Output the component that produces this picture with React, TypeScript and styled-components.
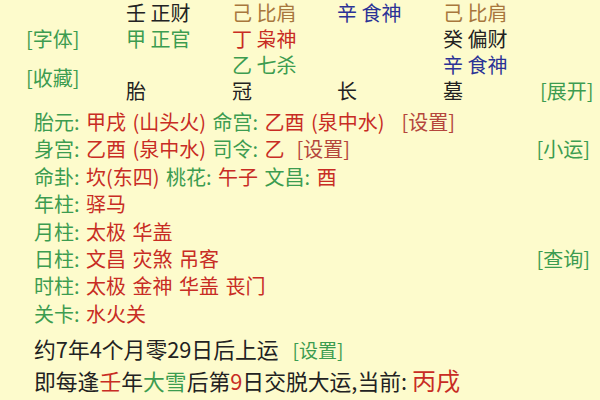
import * as React from "react";
import styled, { createGlobalStyle } from "styled-components";

const GlobalStyle = createGlobalStyle`
    html, body {
        margin: 0;
        padding: 0;
        background: #fdfbcc;
    }
    body {
        font-family: "Noto Sans CJK SC", "Noto Sans", sans-serif;
        overflow: hidden;
    }
`

const colors: { [name: string]: string } = {
    black: "#222222",
    green: "#3c9c50",
    red: "#c82c24",
    blue: "#2b3296",
    brown: "#a8773d",
    link: "#b4463c",
}

const Page = styled.div`
    width: 600px;
    height: 400px;
    overflow: hidden;
    font-size: 20px;
    color: ${colors.black};
`

const PillarGrid = styled.div`
    display: grid;
    grid-template-columns: 126px 106px 105px 106px 97px 1fr;
    grid-template-rows: repeat(4, 26px);
    line-height: 26px;
`

const Cell = styled.div<{ $color?: string; $col: number; $row: number }>`
    grid-column: ${p => p.$col};
    grid-row: ${p => p.$row};
    color: ${p => colors[p.$color || "black"]};
    white-space: nowrap;
`

const SideButtons = styled.div`
    grid-column: 1;
    grid-row: 2 / 5;
    display: flex;
    flex-direction: column;
    gap: 13px;
    padding-left: 26px;
`

const Action = styled.span<{ $color?: string }>`
    color: ${p => colors[p.$color || "green"]};
    white-space: nowrap;
`

const RightAction = styled(Action)`
    grid-column: 6;
    grid-row: 4;
`

const InfoList = styled.div`
    display: flex;
    flex-direction: column;
    margin-top: 4px;
    padding: 0 10px 0 34px;
`

const InfoLine = styled.div`
    display: flex;
    justify-content: space-between;
    align-items: center;
    height: 27.4px;
    line-height: 27.4px;
    white-space: nowrap;
    word-spacing: 2px;
`

const Label = styled.span`
    color: ${colors.green};
`

const Value = styled.span<{ $color?: string; $gap?: number }>`
    color: ${p => colors[p.$color || "red"]};
    margin-left: ${p => p.$gap || 0}px;
`

const Luck = styled.div`
    display: flex;
    flex-direction: column;
    padding-left: 34px;
    margin-top: 7px;
    font-size: 21.8px;
`

const LuckLine = styled.div<{ $height: number }>`
    height: ${p => p.$height}px;
    line-height: ${p => p.$height}px;
    white-space: nowrap;
`

const Small = styled(Action)`
    font-size: 19px;
    margin-left: 14px;
`

const Current = styled.span`
    color: ${colors.red};
    font-size: 24px;
`

interface Entry {
    text: string,
    color: string
}

const pillars: Entry[][] = [
    [{ text: "壬 正财", color: "black" }, { text: "甲 正官", color: "green" }],
    [{ text: "己 比肩", color: "brown" }, { text: "丁 枭神", color: "red" }, { text: "乙 七杀", color: "green" }],
    [{ text: "辛 食神", color: "blue" }],
    [{ text: "己 比肩", color: "brown" }, { text: "癸 偏财", color: "black" }, { text: "辛 食神", color: "blue" }],
]

const stages = ["胎", "冠", "长", "墓"]

const shensha = [
    { label: "年柱", value: "驿马", side: "" },
    { label: "月柱", value: "太极 华盖", side: "" },
    { label: "日柱", value: "文昌 灾煞 吊客", side: "[查询]" },
    { label: "时柱", value: "太极 金神 华盖 丧门", side: "" },
    { label: "关卡", value: "水火关", side: "" },
]

function Pillars() {
    return (
        <PillarGrid>
            {pillars.map((col, ci) =>
                col.map((e, ri) => (
                    <Cell key={ci + "-" + ri} $col={ci + 2} $row={ri + 1} $color={e.color}>{e.text}</Cell>
                ))
            )}
            {stages.map((s, i) => (
                <Cell key={s} $col={i + 2} $row={4}>{s}</Cell>
            ))}
            <SideButtons>
                <Action>[字体]</Action>
                <Action>[收藏]</Action>
            </SideButtons>
            <RightAction>[展开]</RightAction>
        </PillarGrid>
    )
}

export default function App() {
    return (
        <Page>
            <GlobalStyle />
            <Pillars />
            <InfoList>
                <InfoLine>
                    <span>
                        <Label>胎元: </Label><Value>甲戌 (山头火) </Value>
                        <Label>命宫: </Label><Value>乙酉 (泉中水)</Value>
                        <Value $color="link" $gap={17}>[设置]</Value>
                    </span>
                </InfoLine>
                <InfoLine>
                    <span>
                        <Label>身宫: </Label><Value>乙酉 (泉中水) </Value>
                        <Label>司令: </Label><Value>乙</Value>
                        <Value $color="link" $gap={12}>[设置]</Value>
                    </span>
                    <Action>[小运]</Action>
                </InfoLine>
                <InfoLine>
                    <span>
                        <Label>命卦: </Label><Value>坎(东四) </Value>
                        <Label>桃花: </Label><Value>午子 </Value>
                        <Label>文昌: </Label><Value>酉</Value>
                    </span>
                </InfoLine>
                {shensha.map(s => (
                    <InfoLine key={s.label}>
                        <span><Label>{s.label}: </Label><Value>{s.value}</Value></span>
                        {s.side ? <Action>{s.side}</Action> : null}
                    </InfoLine>
                ))}
            </InfoList>
            <Luck>
                <LuckLine $height={30}>
                    约7年4个月零29日后上运<Small>[设置]</Small>
                </LuckLine>
                <LuckLine $height={32}>
                    即每逢<Value>壬</Value>年<Value $color="green">大雪</Value>后第<Value>9</Value>日交脱大运,当前: <Current>丙戌</Current>
                </LuckLine>
            </Luck>
        </Page>
    )
}
